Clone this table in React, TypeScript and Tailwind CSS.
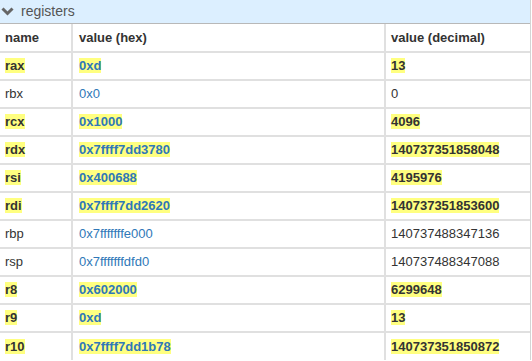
import React from "react";

type Reg = { name: string; hex: string; dec: string; changed: boolean };

const regs: Reg[] = [
  { name: "rax", hex: "0xd", dec: "13", changed: true },
  { name: "rbx", hex: "0x0", dec: "0", changed: false },
  { name: "rcx", hex: "0x1000", dec: "4096", changed: true },
  { name: "rdx", hex: "0x7ffff7dd3780", dec: "140737351858048", changed: true },
  { name: "rsi", hex: "0x400688", dec: "4195976", changed: true },
  { name: "rdi", hex: "0x7ffff7dd2620", dec: "140737351853600", changed: true },
  { name: "rbp", hex: "0x7fffffffe000", dec: "140737488347136", changed: false },
  { name: "rsp", hex: "0x7fffffffdfd0", dec: "140737488347088", changed: false },
  { name: "r8", hex: "0x602000", dec: "6299648", changed: true },
  { name: "r9", hex: "0xd", dec: "13", changed: true },
  { name: "r10", hex: "0x7ffff7dd1b78", dec: "140737351850872", changed: true },
];

function Hl({ on, children }: { on: boolean; children: React.ReactNode }) {
  return on ? <span className="bg-[#ffff80] font-bold">{children}</span> : <span>{children}</span>;
}

export default function App() {
  return (
    <div className="w-[531px] border-r border-[#d4d4d4] font-['Liberation_Sans',Arial,sans-serif] text-[13px] text-[#333]">
      <div className="flex h-6 items-center gap-[7px] border-b border-[#b8b8b8] bg-[#dcefff] pl-[1px] text-[14px] text-[#555]">
        <svg width="13" height="9" viewBox="0 0 13 9">
          <path d="M1.5 1.5 L6.5 6.5 L11.5 1.5" fill="none" stroke="#666" strokeWidth="3" />
        </svg>
        <span>registers</span>
      </div>
      <table className="w-full table-fixed border-collapse">
        <colgroup>
          <col className="w-[72px]" />
          <col className="w-[313px]" />
          <col />
        </colgroup>
        <thead>
          <tr className="h-7 border-b-2 border-[#e0e0e0]">
            <th className="border-r-2 border-[#e0e0e0] px-[5px] text-left font-bold">name</th>
            <th className="border-r-2 border-[#e0e0e0] px-[6px] text-left font-bold">value (hex)</th>
            <th className="px-[5px] text-left font-bold">value (decimal)</th>
          </tr>
        </thead>
        <tbody>
          {regs.map((r) => (
            <tr key={r.name} className="h-7 border-b-2 border-[#e0e0e0] last:border-b-0">
              <td className="border-r-2 border-[#e0e0e0] px-[5px]">
                <Hl on={r.changed}>{r.name}</Hl>
              </td>
              <td className="border-r-2 border-[#e0e0e0] px-[6px] text-[#2f78b8]">
                <Hl on={r.changed}>{r.hex}</Hl>
              </td>
              <td className="px-[5px]">
                <Hl on={r.changed}>{r.dec}</Hl>
              </td>
            </tr>
          ))}
        </tbody>
      </table>
    </div>
  );
}
